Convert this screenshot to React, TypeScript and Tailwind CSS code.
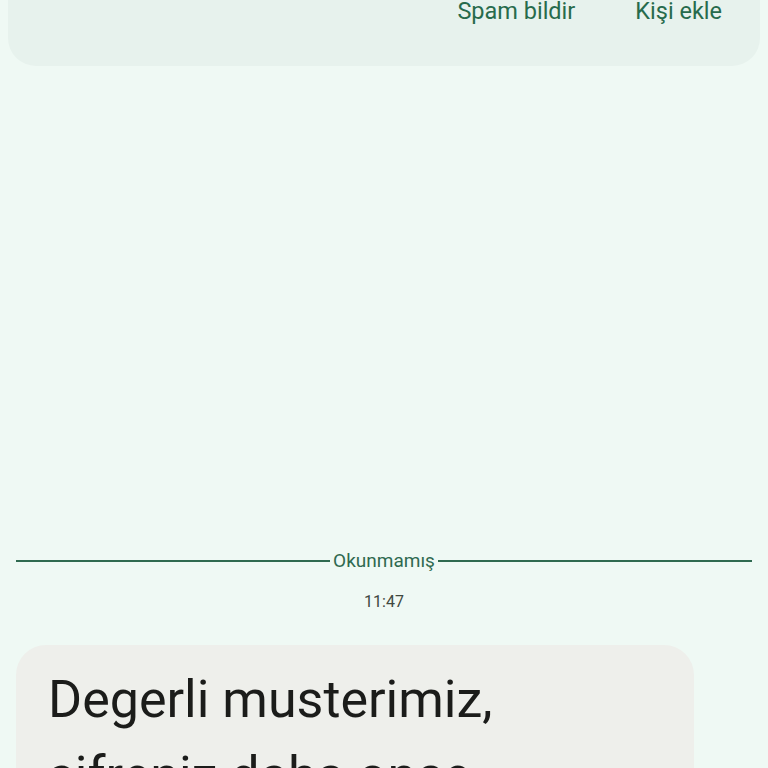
const App = () => {
    return (
        <div className="w-[768px] h-[768px] overflow-hidden bg-[#eff9f4] font-['Roboto',sans-serif]">
            <div className="mx-2 -mt-6 h-[90px] rounded-b-[28px] bg-[#e7f2ed] flex items-start justify-end gap-[60px] pr-[38px] pt-6">
                <span className="text-[23.5px] leading-none text-[#276b4c]">Spam bildir</span>
                <span className="text-[23.5px] leading-none text-[#276b4c]">Kişi ekle</span>
            </div>

            <div className="mt-[483px] mx-4 flex items-center gap-[3px]">
                <div className="flex-1 h-[2px] bg-[#2f6a50]" />
                <span className="text-[19px] leading-6 text-[#2f6a50]">Okunmamış</span>
                <div className="flex-1 h-[2px] bg-[#2f6a50]" />
            </div>

            <div className="mt-[19px] text-center text-[16px] leading-5 text-[#40483f]">11:47</div>

            <div className="mt-[33px] ml-4 w-[678px] rounded-[30px] bg-[#eeefeb] px-8 pt-[17px] pb-8">
                <p className="text-[52px] leading-[76px] text-[#1b1c1a]">
                    Degerli musterimiz,
                    <br />
                    sifreniz daha once
                </p>
            </div>
        </div>
    );
};

export default App;
